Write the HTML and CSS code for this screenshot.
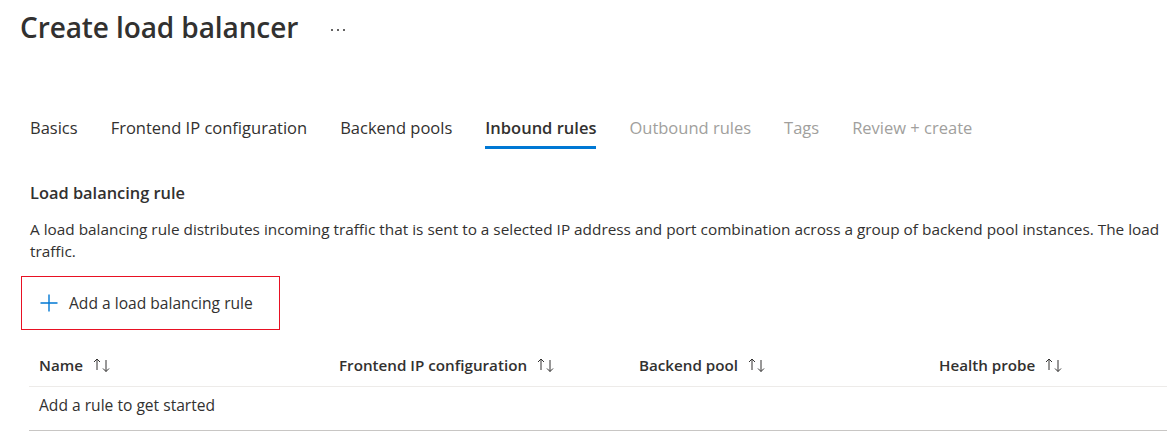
FILE: index.html
```html
<!DOCTYPE html>
<html lang="en">
<head>
<meta charset="utf-8">
<title>Create load balancer</title>
<link rel="stylesheet" href="styles.css">
</head>
<body>
<div class="page">
  <header class="page-head">
    <h1 class="title">Create load balancer</h1>
    <span class="more" aria-label="More">
      <svg width="16" height="4" viewBox="0 0 16 4"><circle cx="2" cy="2" r="1" fill="#323130"/><circle cx="8" cy="2" r="1" fill="#323130"/><circle cx="14" cy="2" r="1" fill="#323130"/></svg>
    </span>
  </header>

  <nav class="tabs">
    <span class="tab">Basics</span>
    <span class="tab">Frontend IP configuration</span>
    <span class="tab">Backend pools</span>
    <span class="tab active">Inbound rules</span>
    <span class="tab disabled">Outbound rules</span>
    <span class="tab disabled">Tags</span>
    <span class="tab disabled">Review + create</span>
  </nav>

  <section class="content">
    <h2 class="section-title">Load balancing rule</h2>
    <p class="desc">
      <span class="desc-line">A load balancing rule distributes incoming traffic that is sent to a selected IP address and port combination across a group of backend pool instances. The load</span>
      <span class="desc-line">traffic.</span>
    </p>

    <div class="add-box">
      <button class="add-btn" type="button">
        <svg class="plus" width="18" height="18" viewBox="0 0 18 18"><path d="M9 0.5V17.5M0.5 9H17.5" stroke="#0078d4" stroke-width="1.4" fill="none"/></svg>
        <span>Add a load balancing rule</span>
      </button>
    </div>

    <table class="rules">
      <thead>
        <tr>
          <th><span class="th-in">Name <svg class="sort" width="18" height="16" viewBox="0 0 18 16"><path d="M4 2V13M1 5L4 2L7 5M13 3V14.5M10 11.5L13 14.5L16 11.5" stroke="#323130" stroke-width="1" fill="none"/></svg></span></th>
          <th><span class="th-in">Frontend IP configuration <svg class="sort" width="18" height="16" viewBox="0 0 18 16"><path d="M4 2V13M1 5L4 2L7 5M13 3V14.5M10 11.5L13 14.5L16 11.5" stroke="#323130" stroke-width="1" fill="none"/></svg></span></th>
          <th><span class="th-in">Backend pool <svg class="sort" width="18" height="16" viewBox="0 0 18 16"><path d="M4 2V13M1 5L4 2L7 5M13 3V14.5M10 11.5L13 14.5L16 11.5" stroke="#323130" stroke-width="1" fill="none"/></svg></span></th>
          <th><span class="th-in">Health probe <svg class="sort" width="18" height="16" viewBox="0 0 18 16"><path d="M4 2V13M1 5L4 2L7 5M13 3V14.5M10 11.5L13 14.5L16 11.5" stroke="#323130" stroke-width="1" fill="none"/></svg></span></th>
        </tr>
      </thead>
      <tbody>
        <tr>
          <td colspan="4">Add a rule to get started</td>
        </tr>
      </tbody>
    </table>
  </section>
</div>
</body>
</html>
```
FILE: styles.css
```css
html, body {
  margin: 0;
  padding: 0;
  background: #ffffff;
}
body {
  font-family: "Open Sans", "Noto Sans", "Liberation Sans", sans-serif;
  color: #323130;
  overflow: hidden;
  width: 1167px;
  height: 440px;
}
.page {
  width: 1167px;
}
.page-head {
  display: flex;
  align-items: center;
  height: 54px;
  padding-left: 20px;
}
.title {
  margin: 0;
  font-size: 28px;
  font-weight: 600;
  line-height: 36px;
  letter-spacing: -0.1px;
}
.more {
  display: flex;
  margin-left: 32px;
  margin-top: 6px;
}
.tabs {
  display: flex;
  margin-top: 54px;
  padding-left: 30px;
  gap: 33px;
  white-space: nowrap;
}
.tab {
  padding-top: 8px;
  padding-bottom: 6px;
  line-height: 24px;
  font-size: 16.5px;
  border-bottom: 3px solid transparent;
  color: #323130;
}
.tab.first {
  margin-right: -3px;
}
.tab.active {
  font-weight: 600;
  border-bottom-color: #0078d4;
}
.tab.disabled {
  color: #a19f9d;
}
.content {
  padding-left: 30px;
}
.section-title {
  margin: 32px 0 0;
  font-size: 16.4px;
  line-height: 24px;
  font-weight: 600;
}
.desc {
  margin: 13px 0 0;
  font-size: 15.35px;
  line-height: 22px;
}
.desc-line {
  display: block;
  white-space: nowrap;
}
.add-box {
  margin: 14px 0 0 -9px;
  width: 257px;
  height: 52px;
  border: 1px solid #e81123;
  display: flex;
  align-items: center;
}
.add-btn {
  display: flex;
  align-items: center;
  gap: 11px;
  margin-left: 18px;
  padding: 0;
  border: 0;
  background: none;
  font-family: inherit;
  font-size: 15.6px;
  color: #323130;
  line-height: 20px;
}
.plus {
  display: block;
}
.rules {
  margin: 14px 0 0 -1px;
  border-collapse: collapse;
  table-layout: fixed;
  width: 1200px;
}
.rules th {
  width: 280px;
  text-align: left;
  font-weight: 600;
  font-size: 15.2px;
  line-height: 20px;
  padding: 11px 10px;
  border-bottom: 1px solid #edebe9;
  white-space: nowrap;
}
.th-in {
  display: inline-flex;
  align-items: center;
  gap: 10px;
}
.sort {
  display: block;
}
.rules td {
  font-size: 15.6px;
  line-height: 22px;
  padding: 7px 10px 14px;
  border-bottom: 1px solid #c8c6c4;
}
```
